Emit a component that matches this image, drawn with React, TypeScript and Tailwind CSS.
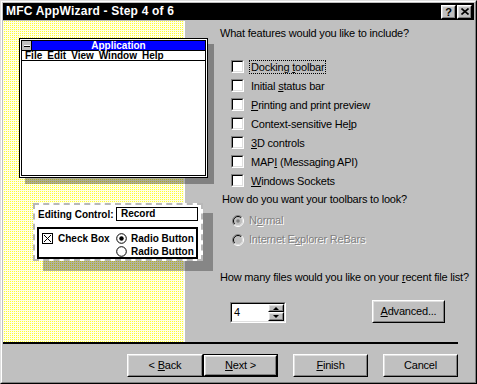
import React from "react"

const Raised = ({ className = "", children }: { className?: string; children?: React.ReactNode }) => (
  <div className={`border border-t-white border-l-white border-r-black border-b-black ${className}`}>
    <div className="h-full flex items-center justify-center border border-t-[#dfdfdf] border-l-[#dfdfdf] border-r-[#808080] border-b-[#808080] bg-[#c0c0c0]">
      {children}
    </div>
  </div>
)

const U = ({ children }: { children: React.ReactNode }) => (
  <span className="underline underline-offset-[1px] decoration-1">{children}</span>
)

const CheckBox = () => (
  <span className="block w-[13px] h-[13px] border border-t-[#808080] border-l-[#808080] border-r-white border-b-white">
    <span className="block w-full h-full bg-white border border-t-black border-l-black border-r-[#dfdfdf] border-b-[#dfdfdf]" />
  </span>
)

const Radio = ({ checked }: { checked?: boolean }) => (
  <svg width="12" height="12" viewBox="0 0 12 12" className="block">
    <circle cx="6" cy="6" r="5.5" fill="#c0c0c0" />
    <path d="M2.1 9.9 A5.5 5.5 0 0 1 9.9 2.1" stroke="#808080" fill="none" />
    <path d="M9.9 2.1 A5.5 5.5 0 0 1 2.1 9.9" stroke="#ffffff" fill="none" />
    <path d="M2.8 9.2 A4.5 4.5 0 0 1 9.2 2.8" stroke="#000000" fill="none" />
    <path d="M9.2 2.8 A4.5 4.5 0 0 1 2.8 9.2" stroke="#dfdfdf" fill="none" />
    {checked && <circle cx="6" cy="6" r="1.8" fill="#808080" />}
  </svg>
)

const MiniRadio = ({ checked }: { checked?: boolean }) => (
  <svg width="11" height="11" viewBox="0 0 11 11" className="block">
    <circle cx="5.5" cy="5.5" r="4.8" fill="#fff" stroke="#000" />
    {checked && <circle cx="5.5" cy="5.5" r="2.2" fill="#000" />}
  </svg>
)

const features: React.ReactNode[] = [
  <>Docking <U>t</U>oolbar</>,
  <>Initial <U>s</U>tatus bar</>,
  <><U>P</U>rinting and print preview</>,
  <>Context-sensitive He<U>l</U>p</>,
  <><U>3</U>D controls</>,
  <>MAP<U>I</U> (Messaging API)</>,
  <><U>W</U>indows Sockets</>,
]

export default function App() {
  return (
    <div className="w-[477px] h-[384px] border border-t-[#dfdfdf] border-l-[#dfdfdf] border-r-black border-b-black font-['Liberation_Sans',Arial,sans-serif] text-black">
      <div className="h-full flex flex-col border border-t-white border-l-white border-r-[#808080] border-b-[#808080] bg-[#c0c0c0] p-px">
        {/* Title bar */}
        <div className="h-[17px] bg-black flex items-center justify-between pl-[3px] pr-[2px]">
          <span className="text-white font-bold text-[12px] leading-[17px] tracking-[0.2px]">MFC AppWizard - Step 4 of 6</span>
          <div className="flex gap-px">
            <Raised className="w-[15px] h-[14px]">
              <span className="font-bold text-[11px] leading-[10px]">?</span>
            </Raised>
            <Raised className="w-[15px] h-[14px]">
              <svg width="8" height="7" viewBox="0 0 8 7">
                <path d="M0.5 0.5 L7.5 6.5 M7.5 0.5 L0.5 6.5" stroke="#000" strokeWidth="1.6" />
              </svg>
            </Raised>
          </div>
        </div>

        {/* Body */}
        <div className="mt-px h-[321px] flex">
          {/* Illustration */}
          <div className="relative z-10 w-[182px] border-r border-white bg-[#ffffc8] bg-[conic-gradient(#ffff30_25%,#ffffe4_0)] bg-[length:2px_2px] flex flex-col">
            <div className="mt-[17px] ml-[16px] w-[189px] h-[140px] border border-black bg-white p-px shadow-[6px_6px_0_rgba(0,0,0,0.33)]">
              <div className="h-full border border-black flex flex-col">
                <div className="h-[10px] flex border-b border-black">
                  <div className="w-[10px] bg-[#c0c0c0] border-r border-black flex items-center justify-center">
                    <span className="block w-[6px] h-[2px] bg-white border-b border-black" />
                  </div>
                  <div className="flex-1 bg-[#0000ff] text-white font-bold text-[10px] leading-[10px] text-center">Application</div>
                </div>
                <div className="h-[10px] flex items-center gap-[5px] pl-[3px] border-b border-black font-bold text-[10px] leading-[10px]">
                  <span><U>F</U>ile</span>
                  <span><U>E</U>dit</span>
                  <span><U>V</U>iew</span>
                  <span><U>W</U>indow</span>
                  <span><U>H</U>elp</span>
                </div>
                <div className="flex-1 bg-white" />
              </div>
            </div>

            <div className="mt-[25px] ml-[30px] w-[170px] h-[58px] border-2 border-dashed border-[#b8b8b8] bg-white shadow-[10px_10px_0_rgba(0,0,0,0.3)] pl-[2px] font-bold text-[10px]">
              <div className="mt-[2px] h-[14px] flex items-center">
                <span className="ml-px w-[78px]">Editing Control:</span>
                <span className="w-[82px] h-[14px] border border-black pl-[4px] leading-[12px]">Record</span>
              </div>
              <div className="mt-[6px] w-[161px] h-[32px] border-2 border-black flex pt-[4px] pl-[3px]">
                <div className="w-[74px] flex items-start gap-[5px]">
                  <svg width="11" height="11" viewBox="0 0 11 11" className="block">
                    <rect x="0.5" y="0.5" width="10" height="10" fill="#fff" stroke="#000" />
                    <path d="M2 2 L9 9 M9 2 L2 9" stroke="#000" />
                  </svg>
                  <span className="leading-[11px]">Check Box</span>
                </div>
                <div className="flex flex-col gap-[2px]">
                  <div className="flex items-center gap-[4px]">
                    <MiniRadio checked />
                    <span className="leading-[11px]">Radio Button</span>
                  </div>
                  <div className="flex items-center gap-[4px]">
                    <MiniRadio />
                    <span className="leading-[11px]">Radio Button</span>
                  </div>
                </div>
              </div>
            </div>
          </div>

          {/* Options */}
          <div className="flex-1 flex flex-col text-[11px] tracking-[-0.2px] leading-[13px]">
            <p className="mt-[6px] ml-[35px]">What features would you like to include?</p>
            <div className="mt-[17px] ml-[46px] flex flex-col">
              {features.map((f, i) => (
                <div key={i} className="h-[19px] flex items-center">
                  <CheckBox />
                  <span className={`ml-[5px] px-px leading-[12px] border border-dotted ${i === 0 ? "border-black" : "border-transparent"}`}>
                    {f}
                  </span>
                </div>
              ))}
            </div>
            <p className="mt-[3px] ml-[37px]">How do you want your toolbars to look?</p>
            <div className="mt-[5px] ml-[47px] flex flex-col text-[#808080] [text-shadow:1px_1px_0_#ffffff]">
              <div className="h-[19px] flex items-center gap-[5px]">
                <Radio checked />
                <span>N<U>o</U>rmal</span>
              </div>
              <div className="h-[19px] flex items-center gap-[5px]">
                <Radio />
                <span>Internet E<U>x</U>plorer ReBars</span>
              </div>
            </div>
            <p className="mt-[22px] ml-[35px]">How many files would you like on your <U>r</U>ecent file list?</p>
            <div className="mt-[16px] ml-[45px] flex items-start">
              <div className="mt-[2px] w-[56px] h-[21px] border border-t-[#808080] border-l-[#808080] border-r-white border-b-white">
                <div className="h-full flex bg-white border border-t-black border-l-black border-r-[#dfdfdf] border-b-[#dfdfdf]">
                  <span className="flex-1 pl-[2px] leading-[17px]">4</span>
                  <div className="w-[16px] flex flex-col">
                    <Raised className="h-[8px]">
                      <span className="block w-0 h-0 border-x-[3px] border-x-transparent border-b-[3px] border-b-black" />
                    </Raised>
                    <Raised className="flex-1">
                      <span className="block w-0 h-0 border-x-[3px] border-x-transparent border-t-[3px] border-t-black" />
                    </Raised>
                  </div>
                </div>
              </div>
              <Raised className="ml-[86px] w-[73px] h-[23px]">
                <span><U>A</U>dvanced...</span>
              </Raised>
            </div>
          </div>
        </div>

        {/* Separator */}
        <div className="h-[2px] w-[455px] bg-black" />

        {/* Buttons */}
        <div className="mt-[10px] flex text-[11px] tracking-[-0.2px]">
          <Raised className="ml-[124px] w-[76px] h-[23px]">
            <span>&lt; <U>B</U>ack</span>
          </Raised>
          <div className="w-[75px] h-[23px] border border-black">
            <Raised className="h-full">
              <span><U>N</U>ext &gt;</span>
            </Raised>
          </div>
          <Raised className="ml-[15px] w-[75px] h-[23px]">
            <span><U>F</U>inish</span>
          </Raised>
          <Raised className="ml-[15px] w-[75px] h-[23px]">
            <span>Cancel</span>
          </Raised>
        </div>
      </div>
    </div>
  )
}
